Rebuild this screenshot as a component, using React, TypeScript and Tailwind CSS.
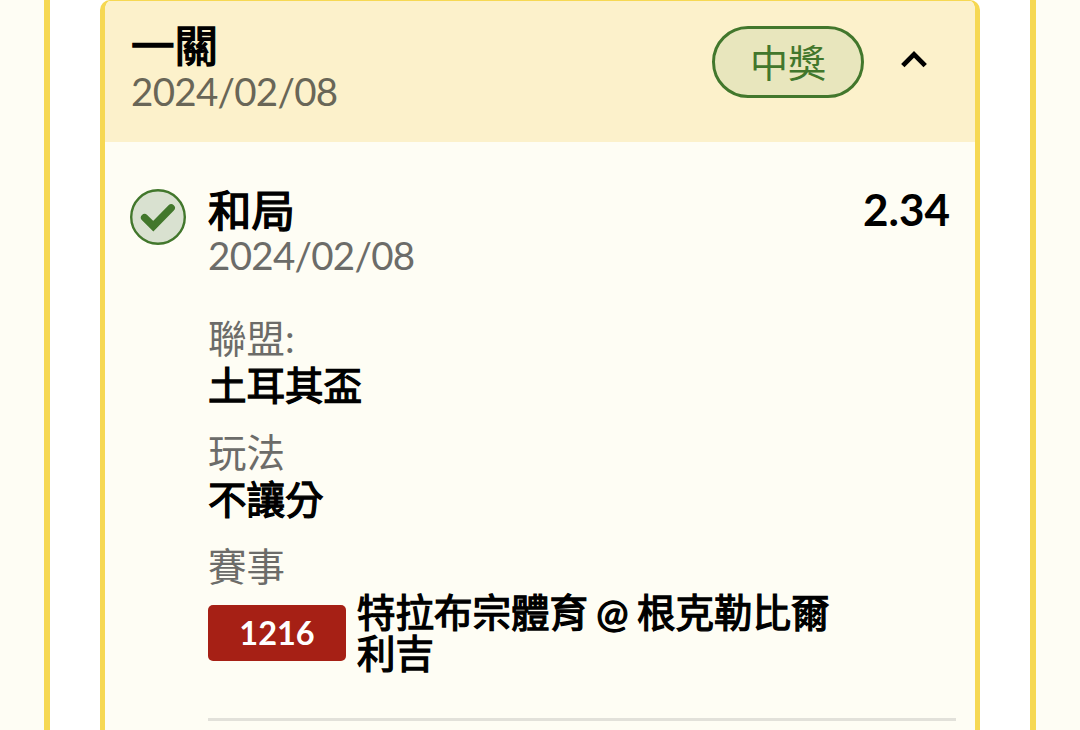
import { ReactNode } from "react";

const details = [
  { label: "聯盟:", value: "土耳其盃" },
  { label: "玩法", value: "不讓分" },
];

const StatusPill = ({ children }: { children: ReactNode }) => (
  <div className="flex h-[72px] w-[152px] items-center justify-center rounded-full border-[3px] border-[#42772c] bg-[#e8e6bd] text-[38px] text-[#42772c]">
    <span className="leading-[40px]">{children}</span>
  </div>
);

const WinIcon = () => (
  <svg className="h-14 w-14" viewBox="0 0 56 56" fill="none">
    <circle cx="28" cy="28" r="26.8" fill="#d9e1d0" stroke="#42772c" strokeWidth="2.4" />
    <path
      d="M14.6 28.6 23.3 37.2 41.2 18.8"
      stroke="#42772c"
      strokeWidth="7.4"
      strokeLinecap="round"
    />
  </svg>
);

const ChevronUp = () => (
  <svg className="h-[18px] w-[26px]" viewBox="0 0 26 18" fill="none">
    <path d="M1.8 15.6 13 4.4 24.2 15.6" stroke="#000" strokeWidth="4.8" />
  </svg>
);

export default function App() {
  return (
    <div className="flex h-[730px] w-[1080px] justify-center overflow-hidden bg-[#fefdf4] font-['Lato','Noto_Sans_CJK_TC',sans-serif] text-black">
      <div className="flex w-[992px] border-x-[6px] border-[#f6d853] bg-white px-[50px]">
        <div className="flex h-[760px] w-[880px] flex-col overflow-hidden rounded-t-[10px] border-x-[5px] border-t border-[#f6d853] bg-[#fefdf4]">
          <div className="flex h-[141px] shrink-0 justify-between bg-[#fcf1cb] pl-[26px]">
            <div className="pt-[21px]">
              <div className="text-[43.5px] leading-[47px] [-webkit-text-stroke:1.4px]">一關</div>
              <div className="text-[38.5px] leading-[45px] tracking-[-0.7px] text-[#696657]">
                2024/02/08
              </div>
            </div>
            <div className="flex items-start pt-[25px] pr-[48px]">
              <StatusPill>中獎</StatusPill>
              <div className="ml-[37px] pt-6">
                <ChevronUp />
              </div>
            </div>
          </div>

          <div className="flex pt-[46px] pr-[19px] pl-[25px]">
            <div className="w-[78px] shrink-0 pt-px">
              <WinIcon />
            </div>
            <div className="flex-1">
              <div className="flex justify-between">
                <div>
                  <div className="mb-px text-[43.5px] leading-[44px] [-webkit-text-stroke:1.4px]">
                    和局
                  </div>
                  <div className="text-[38.5px] leading-[44px] tracking-[-0.7px] text-[#6c6c69]">
                    2024/02/08
                  </div>
                </div>
                <div className="pr-[6px] text-[44px] leading-[42px] font-bold">2.34</div>
              </div>

              <div className="mt-[38px] flex flex-col gap-5 text-[38.5px] leading-[47px]">
                {details.map((item) => (
                  <div key={item.label}>
                    <div className="text-[#6c6c69]">{item.label}</div>
                    <div className="[-webkit-text-stroke:1.3px]">{item.value}</div>
                  </div>
                ))}
                <div className="border-b-[3px] border-[#e2e1da] pb-11">
                  <div className="text-[#6c6c69]">賽事</div>
                  <div className="mt-px flex items-center">
                    <div className="flex h-14 w-[138px] items-center justify-center rounded-[5px] bg-[#a62015] text-[32.5px] font-bold text-white">
                      1216
                    </div>
                    <div className="ml-[11px] w-[490px] pt-px leading-[41px] [word-spacing:-1.5px] [-webkit-text-stroke:1.3px]">
                      特拉布宗體育 @ 根克勒比爾
                      <br />
                      利吉
                    </div>
                  </div>
                </div>
              </div>
            </div>
          </div>
        </div>
      </div>
    </div>
  );
}
